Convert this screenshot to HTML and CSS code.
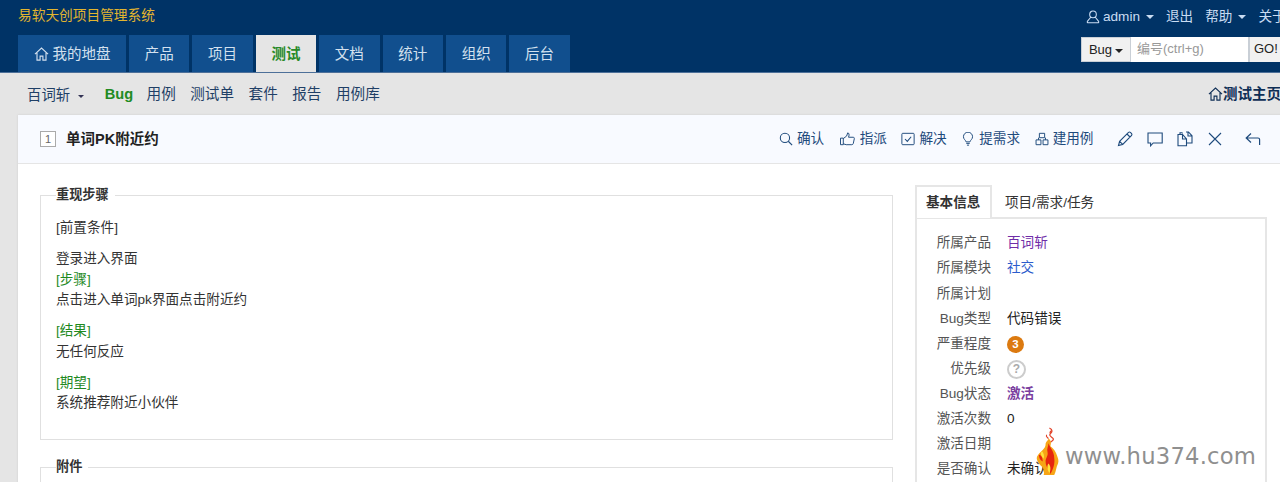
FILE: index.html
```html
<!DOCTYPE html>
<html lang="zh">
<head>
<meta charset="utf-8">
<title>单词PK附近约</title>
<link rel="stylesheet" href="styles.css">
</head>
<body>
<svg class="defs" width="0" height="0" aria-hidden="true">
  <symbol id="i-home" viewBox="0 0 16 16"><path d="M1 8.200 8 1.600l7 6.600M3.200 6.600v7.900h3.300v-4.300h3v4.300h3.300V6.600" fill="none" stroke="currentColor" stroke-width="1.200"/></symbol>
</svg>
<header class="top">
  <div class="top-row">
    <div class="brand">易软天创项目管理系统</div>
    <nav class="user-nav">
      <span class="user-item"><svg class="ico" viewBox="0 0 16 16"><circle cx="8" cy="5" r="3.800" fill="none" stroke="currentColor" stroke-width="1.200"/><path d="M5.600 8 1.600 13q-.7 1.500 1 1.500h10.800q1.700 0 1-1.500L10.400 8" fill="none" stroke="currentColor" stroke-width="1.200"/></svg>admin<i class="caret"></i></span>
      <span class="user-item">退出</span>
      <span class="user-item">帮助<i class="caret"></i></span>
      <span class="user-item">关于</span>
    </nav>
  </div>
  <div class="nav-row">
    <nav class="tabs">
      <a class="tab tab-wide"><svg class="ico-home"><use href="#i-home"/></svg>我的地盘</a>
      <a class="tab">产品</a>
      <a class="tab">项目</a>
      <a class="tab active">测试</a>
      <a class="tab">文档</a>
      <a class="tab">统计</a>
      <a class="tab">组织</a>
      <a class="tab">后台</a>
    </nav>
    <div class="search">
      <span class="search-type">Bug<i class="caret dark"></i></span>
      <span class="search-input">编号(ctrl+g)</span>
      <span class="search-go">GO!</span>
    </div>
  </div>
</header>
<div class="subnav">
  <div class="sub-left">
    <span class="product">百词斩<i class="caret small"></i></span>
    <a class="sub-link current">Bug</a>
    <a class="sub-link">用例</a>
    <a class="sub-link">测试单</a>
    <a class="sub-link">套件</a>
    <a class="sub-link">报告</a>
    <a class="sub-link">用例库</a>
  </div>
  <a class="sub-home"><svg class="ico-home2"><use href="#i-home"/></svg>测试主页</a>
</div>
<main class="card">
  <div class="card-head">
    <div class="title"><span class="id-box">1</span><strong>单词PK附近约</strong></div>
    <div class="actions">
      <a class="act"><svg class="ico" viewBox="0 0 16 16"><circle cx="6.800" cy="6.800" r="5.300" fill="none" stroke="currentColor" stroke-width="1.200"/><path d="m10.600 10.600 4.400 4.400" stroke="currentColor" stroke-width="1.300"/></svg>确认</a>
      <a class="act"><svg class="ico ico-w" viewBox="0 0 18 16"><path d="M1 7h3.200v7.500H1zM4.200 7.500 8 4.600 9.200 1q2 .3 1.600 2.600L10.200 6h5.400q1.500.2 1.200 1.600l-1.200 5.600q-.4 1.300-1.700 1.300H7.500l-3.300-1" fill="none" stroke="currentColor" stroke-width="1.100"/></svg>指派</a>
      <a class="act"><svg class="ico" viewBox="0 0 16 16"><rect x="1" y="1.500" width="14" height="13" rx="1" fill="none" stroke="currentColor" stroke-width="1.100"/><path d="m4.600 8 2.600 2.800 4.400-5.400" fill="none" stroke="currentColor" stroke-width="1.200"/></svg>解决</a>
      <a class="act"><svg class="ico" viewBox="0 0 16 16"><path d="M5.800 11.300C5.200 9 2.800 8.300 2.800 5.400a5.200 5.200 0 0 1 10.400 0c0 2.900-2.400 3.600-3 5.900zM6 13h4M6.800 15h2.400" fill="none" stroke="currentColor" stroke-width="1.100"/></svg>提需求</a>
      <a class="act"><svg class="ico" viewBox="0 0 16 16"><path d="M5 1.500h6v5H5zM1.200 9h5.600v5.500H1.200zM9.200 9h5.600v5.500H9.200zM4 9V6.500M12 9V6.500" fill="none" stroke="currentColor" stroke-width="1.100"/></svg>建用例</a>
      <span class="icon-group">
        <svg class="ico-b" viewBox="0 0 16 16"><path d="M1.500 14.500 2.600 10.300 11.500 1.400q1-.7 1.900 0l1.200 1.200q.7 1 0 1.900L5.700 13.400zM10 3l3 3M2.600 10.300l3.100 3.100" fill="none" stroke="currentColor" stroke-width="1.100"/></svg>
        <svg class="ico-b" viewBox="0 0 16 16"><path d="M1 2h14.200v10H6.200L3.600 14.800V12H1z" fill="none" stroke="currentColor" stroke-width="1.100"/></svg>
        <svg class="ico-b" viewBox="0 0 16 16"><path d="M5.500 3.500H1v11.200h8.500V8L5.500 3.500v4.500h4M3 3.500V1.800h2.600M9 1h2.500l3.500 3.800v7.200h-5.500M11 1v4h4" fill="none" stroke="currentColor" stroke-width="1.100"/></svg>
        <svg class="ico-b" viewBox="0 0 16 16"><path d="m2 2 12 12M14 2 2 14" fill="none" stroke="currentColor" stroke-width="1.100"/></svg>
        <svg class="ico-b back" viewBox="0 0 16 16"><path d="M6 2.500 1.200 7 6 11.500M1.200 7H13q1.600 0 1.600 1.600V14" fill="none" stroke="currentColor" stroke-width="1.200"/></svg>
      </span>
    </div>
  </div>
  <div class="card-body">
    <div class="col-main">
      <fieldset class="box steps">
        <legend>重现步骤</legend>
        <p>[前置条件]</p>
        <p>登录进入界面<br><span class="mark">[步骤]</span><br>点击进入单词pk界面点击附近约</p>
        <p><span class="mark">[结果]</span><br>无任何反应</p>
        <p><span class="mark">[期望]</span><br>系统推荐附近小伙伴</p>
      </fieldset>
      <fieldset class="box">
        <legend>附件</legend>
      </fieldset>
    </div>
    <aside class="col-side">
      <div class="side-tabs">
        <span class="side-tab on">基本信息</span>
        <span class="side-tab">项目/需求/任务</span>
      </div>
      <dl class="info">
        <dt>所属产品</dt><dd class="purple">百词斩</dd>
        <dt>所属模块</dt><dd class="blue">社交</dd>
        <dt>所属计划</dt><dd></dd>
        <dt>Bug类型</dt><dd>代码错误</dd>
        <dt>严重程度</dt><dd><span class="sev">3</span></dd>
        <dt>优先级</dt><dd><span class="pri">?</span></dd>
        <dt>Bug状态</dt><dd class="status">激活</dd>
        <dt>激活次数</dt><dd>0</dd>
        <dt>激活日期</dt><dd></dd>
        <dt>是否确认</dt><dd>未确认</dd>
      </dl>
    </aside>
  </div>
</main>
<div class="watermark">
  <svg class="flame" viewBox="0 0 24 50">
    <path d="M14 1c4 2 3 4 1 6-2 2 1 3 3 5 1 2-2 3-3 4M17 3c-2 1-3 3-2 4M11 8c-1 2 1 3 2 4" fill="none" stroke="#e2432a" stroke-width="1.200"/>
    <path d="M13 12c3 2 3 5 2 8 3 2 6 6 7 10 1 3 2 5 1 8-2 4-2 8-4 12H8c1-3 0-5-1-8-2-2-5-4-6-8-1-4 3-7 6-10 2-2 3-4 3-6 0-3 3-4 3-6z" fill="#f7a516"/>
    <path d="M13 17c2 5 6 9 6 15 1 6-1 12-4 17-1-5-5-7-5-13 0-4 3-6 2-10-1-3 1-6 1-9zM3 29c3 0 4 4 4 7-2-1-4-3-4-7z" fill="#e6260f"/>
    <path d="M6 25c2 2 3 5 2 8-2-2-4-5-2-8zM13 38c2 2 3 6 1 10-2-3-3-7-1-10z" fill="#ffe23c"/>
  </svg>
  <span>www.hu374.com</span>
</div>
</body>
</html>
```
FILE: styles.css
```css
* { box-sizing: border-box; }
html, body { height: 482px; overflow: hidden; }
body {
  margin: 0;
  width: 1280px;
  background: #e5e5e5;
  color: #222;
  font: 13.6px/20.8px "Liberation Sans", "Noto Sans CJK SC", sans-serif;
  position: relative;
}
.defs { position: absolute; }
.top { height: 73px; background: #003366; border-bottom: 1px solid #4d7099; display: flex; flex-direction: column; }
.top-row { height: 35px; display: flex; justify-content: space-between; align-items: flex-start; padding-left: 18px; }
.brand { color: #e3b52f; font-size: 13.7px; line-height: 32px; }
.user-nav { display: flex; gap: 12px; width: 194px; flex: none; color: #c9dcf2; line-height: 34px; white-space: nowrap; overflow: hidden; }
.user-item { display: inline-flex; align-items: center; }
.ico { width: 14px; height: 14px; margin-right: 4px; flex: none; }
.user-item .ico { margin-right: 3px; }
.ico-w { width: 17px; }
.caret { display: inline-block; width: 0; height: 0; margin-left: 6px; border: 4px solid transparent; border-top-color: currentColor; border-bottom: 0; }
.caret.dark { color: #222; margin-left: 3px; vertical-align: middle; }
.caret.small { border-width: 3px; border-bottom: 0; margin-left: 8px; vertical-align: middle; color: #335; }
.nav-row { flex: 1; display: flex; justify-content: space-between; padding-left: 18px; }
.tabs { display: flex; gap: 3px; align-items: stretch; }
.tab { width: 60.4px; display: flex; align-items: center; justify-content: center; background: #114f8e; color: #d4e1ef; font-size: 14.5px; padding-top: 1px; }
.tab-wide { width: 108px; }
.tab.active { background: #e5e5e5; color: #288a28; font-weight: 700; }
.ico-home { width: 15px; height: 16px; margin-right: 4px; color: #d4e1ef; }
.search { display: flex; height: 25px; margin-top: 2px; width: 199px; flex: none; font-size: 13px; line-height: 23px; overflow: hidden; }
.search-type { width: 50px; background: #f1f1f1; border: 1px solid #c9cfd6; color: #222; text-align: center; white-space: nowrap; }
.search-input { width: 117px; background: #fff; color: #999; padding-left: 6px; }
.search-go { flex: 1; background: #f1f1f1; border-left: 2px solid #c9cfd6; padding-left: 4px; color: #222; }
.subnav { height: 42px; display: flex; justify-content: space-between; align-items: center; padding-left: 27px; background: #e5e5e5; }
.sub-left { display: flex; align-items: center; gap: 14.5px; color: #1f3f66; font-size: 14.6px; }
.product { margin-right: 5px; font-size: 14.4px; padding-top: 3px; }
.sub-link.current { color: #228b22; font-weight: 700; margin: 0 -1px 0 1px; }
.sub-home { display: flex; align-items: center; color: #0e2e55; font-weight: 700; font-size: 14.5px; white-space: nowrap; margin-right: -1px; }
.ico-home2 { width: 15px; height: 16px; color: #0e2e55; }
.card { margin-left: 18px; width: 1290px; background: #fff; height: 380px; box-shadow: 0 0 2px #ccc; }
.card-head { height: 49px; background: #f8faff; border-bottom: 1px solid #e5e5e5; display: flex; justify-content: space-between; align-items: center; padding: 0 47px 0 22px; }
.title { display: flex; align-items: center; gap: 10px; color: #222; font-size: 14.5px; }
.id-box { width: 16px; height: 16px; border: 1px solid #aaa; font-size: 11px; line-height: 14px; color: #666; text-align: center; background: #fff; }
.actions { display: flex; align-items: center; gap: 14.6px; color: #1e4a7c; }
.act { display: flex; align-items: center; }
.icon-group { display: flex; align-items: center; gap: 14px; margin-left: 9px; }
.ico-b { width: 16px; height: 16px; }
.back { margin-left: 8px; }
.card-body { display: flex; padding: 21px 0 0 22px; gap: 22px; }
.col-main { width: 853px; flex: none; display: flex; flex-direction: column; gap: 17px; }
.box { margin: 0; padding: 0 15px; border: 1px solid #e0e0e0; min-height: 40px; min-width: 0; }
.box legend { padding: 0 6px 0 0; margin-left: 0; font-weight: 700; font-size: 13.2px; color: #333; line-height: 20px; }
.steps { height: 255px; padding-top: 13px; }
.steps p { margin: 0 0 10.4px; color: #333; line-height: 20.6px; }
.mark { color: #1f8a1f; }
.col-side { width: 352px; flex: none; }
.side-tabs { display: flex; height: 33px; position: relative; z-index: 1; }
.side-tab { padding: 2px 13px 0; line-height: 31px; color: #333; }
.side-tab.on { width: 77px; padding: 0 9px; font-weight: 700; background: #fff; border: 2px solid #e6e6e6; border-bottom: 0; height: 33px; white-space: nowrap; }
.info { margin: -1px 0 0; height: 400px; border: 2px solid #e6e6e6; padding: 12.2px 0 0; display: grid; grid-template-columns: 74px 1fr; grid-auto-rows: 25.1px; column-gap: 16px; align-items: center; }
.info dt { text-align: right; color: #555; }
.info dd { margin: 0; color: #222; }
.purple { color: #6f2da8 !important; }
.blue { color: #2c5ccc !important; }
.status { color: #7b3fa0 !important; font-weight: 700; }
.sev { display: block; width: 17px; height: 17px; border-radius: 50%; background: #dc7a10; color: #fff; font-size: 11.5px; font-weight: 700; line-height: 17px; text-align: center; }
.pri { display: block; width: 19px; height: 19px; border-radius: 50%; border: 2px solid #ccc; color: #aaa; font-size: 12px; font-weight: 700; line-height: 15px; text-align: center; }
.watermark { position: absolute; left: 1036px; top: 426px; display: flex; align-items: center; gap: 6px; color: #8f8f8f; font: 22.7px/1 "DejaVu Sans", sans-serif; letter-spacing: 0.2px; }
.flame { width: 23px; height: 50px; }
.watermark span { padding-top: 10px; }
```
